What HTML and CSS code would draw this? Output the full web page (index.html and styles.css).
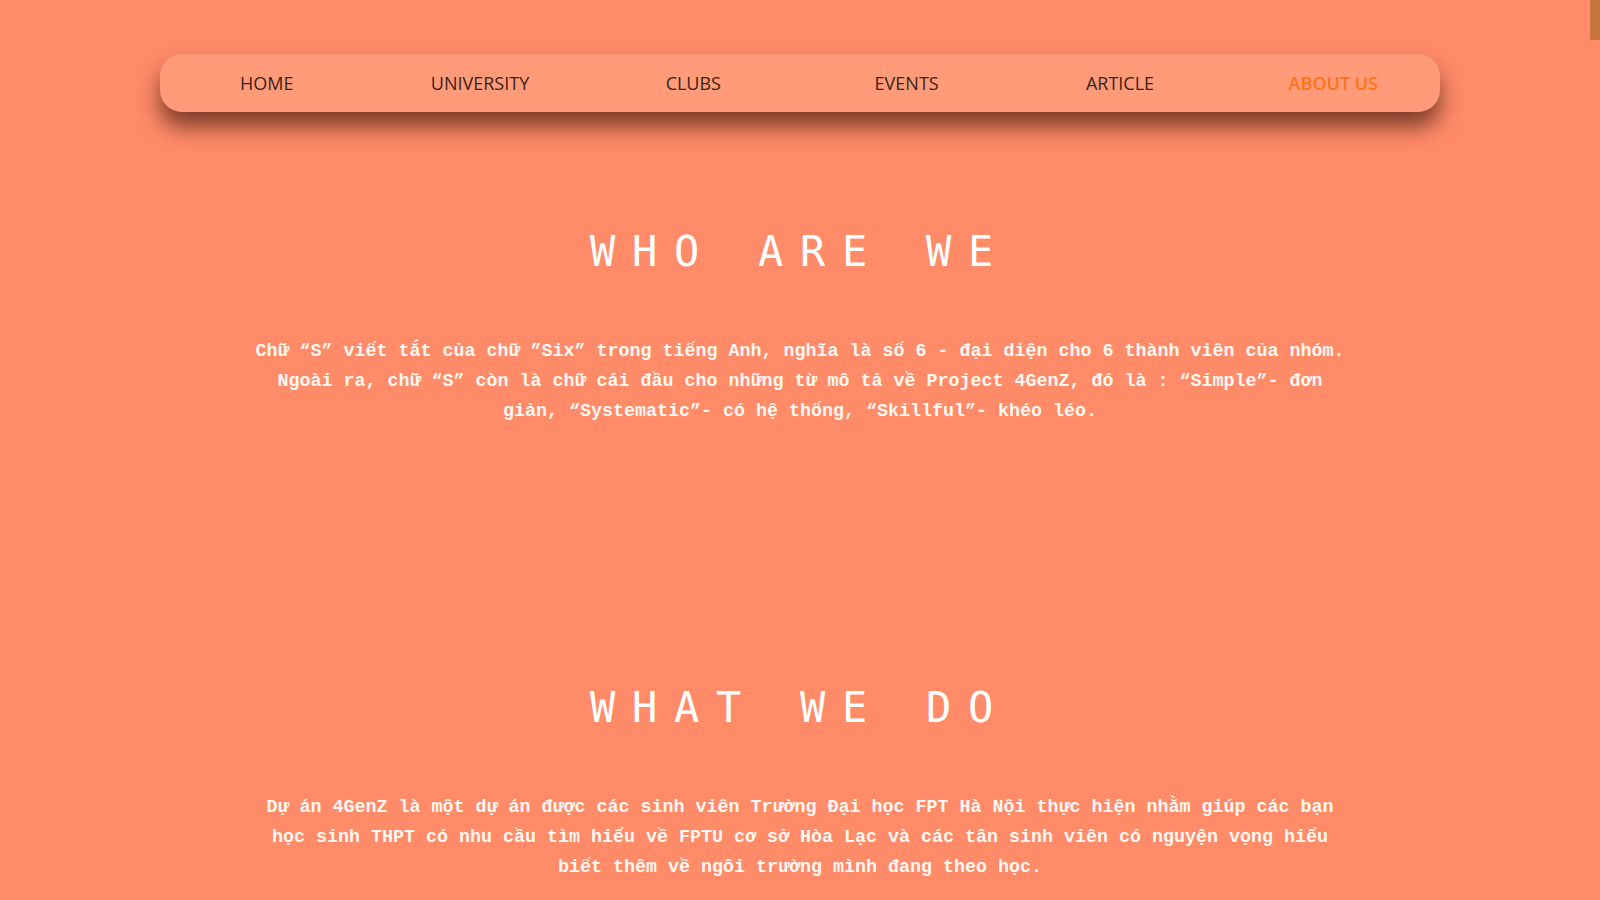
FILE: index.html
```html
<!DOCTYPE html>
<html lang="vi">
<head>
<meta charset="utf-8">
<title>About us - 4GenZ</title>
<link rel="stylesheet" href="styles.css">
</head>
<body>
<div class="scroll-thumb"></div>
<header class="topbar">
  <nav class="nav">
    <a class="nav-link" href="#">HOME</a>
    <a class="nav-link" href="#">UNIVERSITY</a>
    <a class="nav-link" href="#">CLUBS</a>
    <a class="nav-link" href="#">EVENTS</a>
    <a class="nav-link" href="#">ARTICLE</a>
    <a class="nav-link active" href="#">ABOUT US</a>
  </nav>
</header>
<main>
  <section class="block">
    <h2 class="block-title">WHO ARE WE</h2>
    <p class="block-text">Chữ “S” viết tắt của chữ ”Six” trong tiếng Anh, nghĩa là số 6 - đại diện cho 6 thành viên của nhóm. Ngoài ra, chữ “S” còn là chữ cái đầu cho những từ mô tả về Project 4GenZ, đó là : “Simple”- đơn giản, “Systematic”- có hệ thống, “Skillful”- khéo léo.</p>
  </section>
  <section class="block">
    <h2 class="block-title">WHAT WE DO</h2>
    <p class="block-text">Dự án 4GenZ là một dự án được các sinh viên Trường Đại học FPT Hà Nội thực hiện nhằm giúp các bạn học sinh THPT có nhu cầu tìm hiểu về FPTU cơ sở Hòa Lạc và các tân sinh viên có nguyện vọng hiểu biết thêm về ngôi trường mình đang theo học.</p>
  </section>
</main>
</body>
</html>
```

FILE: styles.css
```css
html {
  scrollbar-width: none;
}
html::-webkit-scrollbar {
  display: none;
}
body {
  margin: 0;
  background: #ff8b68;
  font-family: "Liberation Mono", "DejaVu Sans Mono", monospace;
  color: #fff8f2;
}
.scroll-thumb {
  position: fixed;
  top: 0;
  right: 0;
  width: 10px;
  height: 40px;
  background: #c8773a;
  z-index: 10;
}
.topbar {
  padding-top: 54px;
}
.nav {
  width: 1280px;
  height: 58px;
  margin: 0 auto;
  display: grid;
  grid-template-columns: repeat(6, 1fr);
  align-items: center;
  background: #ff9b79;
  border-radius: 22px;
  box-shadow: 0 15px 22px rgba(40, 10, 0, 0.6);
}
.nav-link {
  text-align: center;
  font-family: "Open Sans", "Noto Sans", sans-serif;
  font-size: 18px;
  color: #3a2317;
  text-decoration: none;
}
.nav-link.active {
  color: #ff7317;
  font-weight: 600;
}
.block {
  padding: 115px 0 141px;
  display: flex;
  flex-direction: column;
  align-items: center;
}
.block-title {
  margin: 0;
  font-family: "DejaVu Sans Mono", monospace;
  font-size: 42px;
  line-height: 50px;
  font-weight: normal;
  letter-spacing: 16.7px;
  color: #ffffff;
}
.block-text {
  margin: 60px 0 0;
  width: 100ch;
  font-size: 18.33px;
  line-height: 30px;
  font-weight: bold;
  text-align: center;
}
```
